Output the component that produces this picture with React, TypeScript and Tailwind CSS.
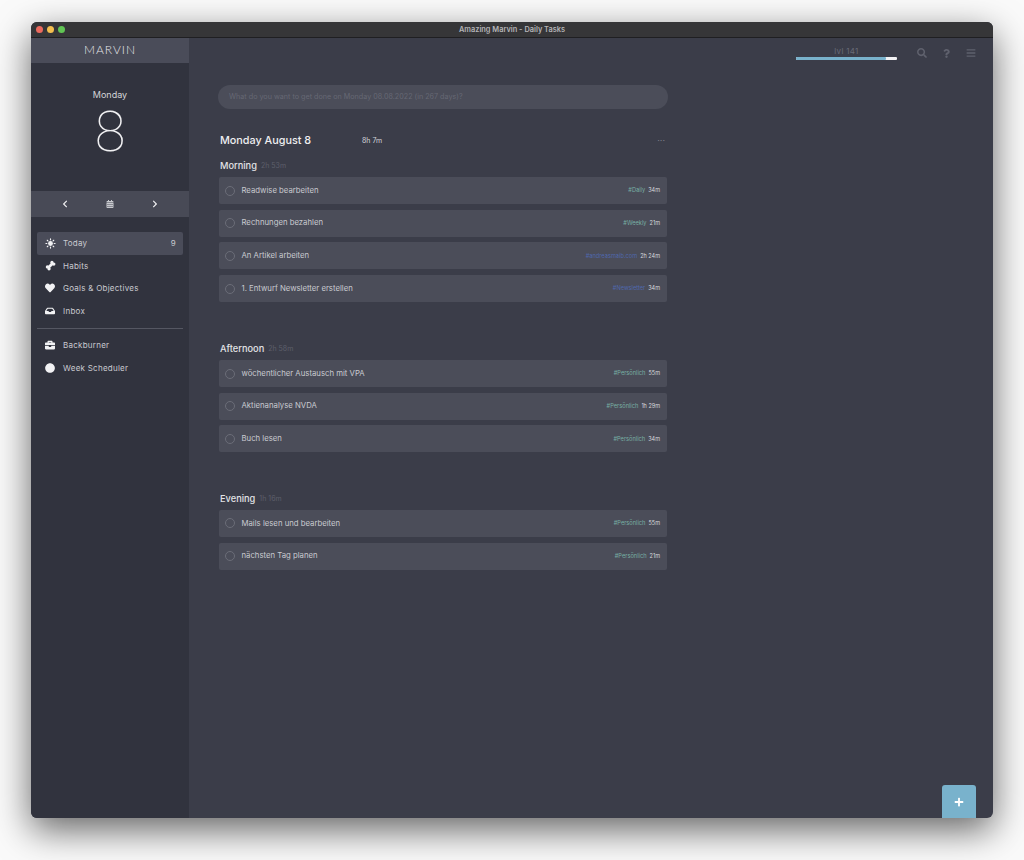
import type { ReactNode } from 'react'
import { Sun } from 'lucide-react'
import {
  FaBars,
  FaBriefcase,
  FaCalendarAlt,
  FaChevronLeft,
  FaChevronRight,
  FaCircle,
  FaHeart,
  FaInbox,
  FaPlus,
  FaQuestion,
  FaSearch,
} from 'react-icons/fa'

interface Task {
  title: string
  tag: string
  tagColor: string
  time: string
}

const GREEN = 'text-[#78afa4]'
const BLUE = 'text-[#4f68ad]'

const morning: Task[] = [
  { title: 'Readwise bearbeiten', tag: '#Daily', tagColor: GREEN, time: '34m' },
  { title: 'Rechnungen bezahlen', tag: '#Weekly', tagColor: GREEN, time: '21m' },
  { title: 'An Artikel arbeiten', tag: '#andreasmaib.com', tagColor: BLUE, time: '2h 24m' },
  { title: '1. Entwurf Newsletter erstellen', tag: '#Newsletter', tagColor: BLUE, time: '34m' },
]

const afternoon: Task[] = [
  { title: 'wöchentlicher Austausch mit VPA', tag: '#Persönlich', tagColor: GREEN, time: '55m' },
  { title: 'Aktienanalyse NVDA', tag: '#Persönlich', tagColor: GREEN, time: '1h 29m' },
  { title: 'Buch lesen', tag: '#Persönlich', tagColor: GREEN, time: '34m' },
]

const evening: Task[] = [
  { title: 'Mails lesen und bearbeiten', tag: '#Persönlich', tagColor: GREEN, time: '55m' },
  { title: 'nächsten Tag planen', tag: '#Persönlich', tagColor: GREEN, time: '21m' },
]

function BoneIcon() {
  return (
    <svg width="11" height="11" viewBox="0 0 12 12" fill="currentColor" stroke="currentColor">
      <path d="M3.5 8.5 8.5 3.5" strokeWidth="3" />
      <circle cx="2.6" cy="7.6" r="1.8" stroke="none" />
      <circle cx="4.4" cy="9.6" r="1.8" stroke="none" />
      <circle cx="7.6" cy="2.6" r="1.8" stroke="none" />
      <circle cx="9.6" cy="4.4" r="1.8" stroke="none" />
    </svg>
  )
}

function NavItem({ icon, label, count, active }: { icon: ReactNode; label: string; count?: number; active?: boolean }) {
  return (
    <div className={`flex h-[22.5px] items-center rounded-[2px] pl-[8px] pr-[7px] text-[8px] tracking-[0.25px] text-[#c9cad0] ${active ? 'bg-[#4a4c59]' : ''}`}>
      <span className="flex w-[18px] text-[10px] text-[#f2f2f4]">{icon}</span>
      <span>{label}</span>
      {count !== undefined && <span className="ml-auto">{count}</span>}
    </div>
  )
}

function TaskRow({ task }: { task: Task }) {
  return (
    <div className="flex h-[27px] items-center rounded-[2px] bg-[#4b4d59] pl-[6px] pr-[7px] text-[7.75px]">
      <span className="h-[10px] w-[10px] rounded-full border border-[#6b6d78]" />
      <span className="ml-[6.5px] text-[#c9cad0]">{task.title}</span>
      <span className={`ml-auto text-[5.7px] ${task.tagColor}`}>{task.tag}</span>
      <span className="ml-[3px] text-[5.5px] text-[#d8d9dd]">{task.time}</span>
    </div>
  )
}

function Section({ title, total, tasks, className }: { title: string; total: string; tasks: Task[]; className: string }) {
  return (
    <section className={className}>
      <div className="flex h-[13px] items-center pl-[1px]">
        <span className="text-[9.25px] font-medium text-[#e2e3e6]">{title}</span>
        <span className="ml-[4px] text-[7px] text-[#5d5f6b]">{total}</span>
      </div>
      <div className="mt-[4.5px] flex flex-col gap-[5.7px]">
        {tasks.map(task => (
          <TaskRow key={task.title} task={task} />
        ))}
      </div>
    </section>
  )
}

export default function App() {
  return (
    <div className="h-[860px] w-[1024px] overflow-hidden bg-[#fafafa] pl-[31px] pt-[22px] font-['Inter',sans-serif]">
      <div className="relative flex h-[796px] w-[962px] flex-col overflow-hidden rounded-[6px] bg-[#3b3d49] shadow-[0_12px_36px_rgba(0,0,0,0.6)]">
        <div className="relative flex h-[16px] shrink-0 items-center justify-center border-b border-[#1f1f22] bg-[#363638]">
          <div className="absolute left-[5px] top-[4px] flex gap-[4px]">
            <span className="h-[7px] w-[7px] rounded-full bg-[#ec6a5e]" />
            <span className="h-[7px] w-[7px] rounded-full bg-[#f4bf4f]" />
            <span className="h-[7px] w-[7px] rounded-full bg-[#61c554]" />
          </div>
          <span className="text-[7.4px] font-semibold text-[#b4b4b6]">Amazing Marvin - Daily Tasks</span>
        </div>

        <div className="flex min-h-0 flex-1">
          <aside className="flex w-[158px] shrink-0 flex-col bg-[#31333e]">
            <div className="flex h-[25px] items-center justify-center bg-[#4a4c59] pb-[1px] font-['Lato',sans-serif] text-[12px] font-light tracking-[1px] text-[#e6e7ea]">
              MARVIN
            </div>
            <div className="mt-[25.5px] text-center text-[9px] leading-[12px] text-[#d4d5d9]">Monday</div>
            <div className="mt-[1.5px] text-center font-['Roboto',sans-serif] text-[56px] font-thin leading-[60px] text-[#f0f0f2]">8</div>
            <div className="mt-[29px] flex h-[26px] items-center justify-between bg-[#484a56] pl-[30px] pr-[30px] text-[8px] text-[#eeeef0]">
              <FaChevronLeft />
              <FaCalendarAlt className="text-[#c8c9ce]" />
              <FaChevronRight />
            </div>
            <nav className="mt-[15px] px-[6px]">
              <NavItem icon={<Sun size={11} strokeWidth={2.5} fill="currentColor" />} label="Today" count={9} active />
              <NavItem icon={<BoneIcon />} label="Habits" />
              <NavItem icon={<FaHeart />} label="Goals & Objectives" />
              <NavItem icon={<FaInbox />} label="Inbox" />
              <div className="mb-[5px] mt-[6px] h-px bg-[#555762]" />
              <NavItem icon={<FaBriefcase />} label="Backburner" />
              <NavItem icon={<FaCircle />} label="Week Scheduler" />
            </nav>
          </aside>

          <main className="min-w-0 flex-1 pl-[29px] pt-[47px]">
            <div className="flex h-[24px] w-[450px] items-center rounded-full bg-[#4b4d59] pl-[11px] text-[7.2px] text-[#666874]">
              What do you want to get done on Monday 08.08.2022 (in 267 days)?
            </div>

            <div className="ml-[1px] w-[448px]">
              <div className="mt-[24px] flex h-[16px] items-center pl-[1px]">
                <span className="w-[142px] text-[10.8px] font-medium text-[#eeeef0]">Monday August 8</span>
                <span className="text-[7px] text-[#d4d5d9]">8h 7m</span>
                <span className="mb-[2px] ml-auto mr-[2px] text-[9px] leading-none text-[#7d7f89]">···</span>
              </div>
              <Section className="mt-[10.5px]" title="Morning" total="2h 53m" tasks={morning} />
              <Section className="mt-[40.5px]" title="Afternoon" total="2h 58m" tasks={afternoon} />
              <Section className="mt-[40px]" title="Evening" total="1h 16m" tasks={evening} />
            </div>
          </main>
        </div>

        <div className="absolute left-[765px] top-[24px] w-[101px]">
          <div className="text-center text-[8px] leading-[10px] tracking-[0.3px] text-[#696b77]">lvl 141</div>
          <div className="mt-[1px] h-[3px] rounded-[1px] bg-[#f2f2f4]">
            <div className="h-full w-[89%] rounded-[1px] bg-[#79b2cc]" />
          </div>
        </div>
        <div className="absolute left-[886px] top-[26px] flex items-center gap-[15px] text-[10px] text-[#5f616d]">
          <FaSearch />
          <FaQuestion className="text-[9px]" />
          <FaBars />
        </div>

        <button className="absolute bottom-0 left-[911px] flex h-[33px] w-[34px] items-center justify-center rounded-t-[3px] bg-[#79b2cc] text-[10px] text-white">
          <FaPlus />
        </button>
      </div>
    </div>
  )
}
